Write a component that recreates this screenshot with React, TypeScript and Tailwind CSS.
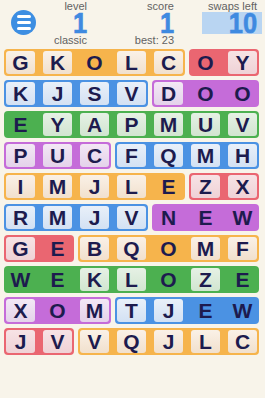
import * as React from 'react';

type Tone = 'o' | 'r' | 'b' | 'g' | 'p';

// group background and tile gradient for each colour
const TONES: Record<Tone, { group: string; tile: string }> = {
	o: { group: 'bg-[#f6b44c]', tile: 'bg-gradient-to-b from-[#faf1e7] to-[#f1e0cd]' },
	r: { group: 'bg-[#ea6671]', tile: 'bg-gradient-to-b from-[#f7e3e5] to-[#efd2d6]' },
	b: { group: 'bg-[#4b92e3]', tile: 'bg-gradient-to-b from-[#e9f0f9] to-[#d3e1f3]' },
	g: { group: 'bg-[#4cb050]', tile: 'bg-gradient-to-b from-[#e6f1e5] to-[#d1e5d0]' },
	p: { group: 'bg-[#c56cd9]', tile: 'bg-gradient-to-b from-[#f3e8f5] to-[#e4d2ea]' },
};

const SPAN: Record<number, string> = {
	2: 'col-span-2 grid-cols-2',
	3: 'col-span-3 grid-cols-3',
	4: 'col-span-4 grid-cols-4',
	5: 'col-span-5 grid-cols-5',
	7: 'col-span-7 grid-cols-7',
};

// lowercase letter = already used (no tile behind it)
const BOARD: [Tone, string][][] = [
	[['o', 'GKoLC'], ['r', 'oY']],
	[['b', 'KJSV'], ['p', 'Doo']],
	[['g', 'eYAPMUV']],
	[['p', 'PUC'], ['b', 'FQMH']],
	[['o', 'IMJLe'], ['r', 'ZX']],
	[['b', 'RMJV'], ['p', 'new']],
	[['r', 'Ge'], ['o', 'BQoMF']],
	[['g', 'weKLoZe']],
	[['p', 'XoM'], ['b', 'TJew']],
	[['r', 'JV'], ['o', 'VQJLC']],
];

const BigNumber = ({ children }: { children: React.ReactNode }) => (
	<span className="inline-block origin-right scale-x-[0.88] [-webkit-text-stroke:0.6px_#3f8ae0]">
		{children}
	</span>
);

const Stat = ({ label, value, sub, width }: { label: string; value: string; sub?: string; width: string }) => (
	<div className={`${width} shrink-0 text-right`}>
		<div className="text-[11px] leading-[12px] text-[#626262]">{label}</div>
		<div className="text-[29px] leading-[22px] font-bold text-[#3f8ae0]">
			<BigNumber>{value}</BigNumber>
		</div>
		{sub && <div className="text-[11px] leading-[12px] text-[#626262]">{sub}</div>}
	</div>
);

export default function App() {
	return (
		<div
			className="h-[398px] w-[265px] overflow-hidden bg-[#f8f4ea]"
			style={{ fontFamily: '"Liberation Sans", Arial, sans-serif' }}
		>
			{/* Header */}
			<div className="flex h-[46px] items-start">
				<div className="ml-[11px] mt-[10px] flex h-[25px] w-[25px] shrink-0 flex-col items-center justify-center gap-[3.5px] rounded-full bg-[#3d8ee2]">
					<span className="h-[2.5px] w-[14px] rounded-full bg-white" />
					<span className="h-[2.5px] w-[14px] rounded-full bg-white" />
					<span className="h-[2.5px] w-[14px] rounded-full bg-white" />
				</div>
				<Stat label="level" value="1" sub="classic" width="w-[51px]" />
				<Stat label="score" value="1" sub="best: 23" width="w-[87px]" />
				<div className="ml-[28px] w-[60px] shrink-0 text-right">
					<div className="pr-[5px] text-[11px] leading-[12px] text-[#626262]">swaps left</div>
					<div className="bg-[#b9d5f2] pr-[5px] text-[29px] leading-[22px] font-bold text-[#3f8ae0]">
						<BigNumber>10</BigNumber>
					</div>
				</div>
			</div>

			{/* Board */}
			<div className="ml-[4px] mt-[3px] grid w-[255px] grid-cols-7 gap-[4px]">
				{BOARD.map((row, ri) =>
					row.map(([tone, letters], gi) => (
						<div
							key={`${ri}-${gi}`}
							className={`${SPAN[letters.length]} ${TONES[tone].group} grid h-[27px] gap-x-[8px] rounded-[4px] p-[2px]`}
						>
							{letters.split('').map((ch, ci) => {
								const used = ch === ch.toLowerCase();
								return (
									<div
										key={ci}
										className={`flex h-[23px] items-center justify-center rounded-[3px] text-[21px] font-bold leading-none text-[#1d1b4e] ${used ? '' : TONES[tone].tile}`}
									>
										{ch.toUpperCase()}
									</div>
								);
							})}
						</div>
					)),
				)}
			</div>
		</div>
	);
}
